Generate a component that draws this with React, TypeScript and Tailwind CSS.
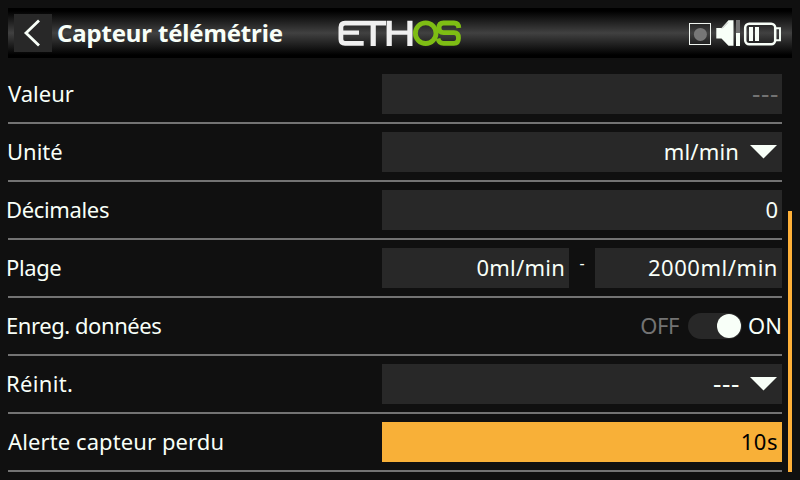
import React from "react";

function Row({ label, labelClass, children }: { label: string; labelClass: string; children: React.ReactNode }) {
  return (
    <div className="flex h-[58px] items-center justify-between border-b-2 border-[#737373]">
      <span className={`whitespace-pre pb-[2px] leading-[38px] ${labelClass}`}>{label}</span>
      {children}
    </div>
  );
}

function Field({ className, children }: { className: string; children: React.ReactNode }) {
  return <div className={`flex h-10 items-center justify-end leading-[38px] ${className}`}>{children}</div>;
}

function Value({ className, children }: { className: string; children: React.ReactNode }) {
  return <span className={`pb-[2px] ${className}`}>{children}</span>;
}

function Caret() {
  return (
    <svg className="mr-[5px] ml-[11px] h-[14px] w-[27px]" viewBox="0 0 27 14">
      <path d="M0 0H27L13.5 13.5Z" fill="#f8fff8" />
    </svg>
  );
}

function Logo() {
  return (
    <svg className="h-[26px] w-[124px]" viewBox="0 0 124 26" fill="none">
      <g stroke="#f0f0f0" strokeWidth="4.8">
        <path d="M48 3.100H7Q2.9 3.100 2.9 7.200V19.200Q2.9 23.300 7 23.300H25.700" />
        <path d="M35.2 3V26M51.2 .8V26M71.900 .8V26" strokeWidth="5.200" />
        <path d="M3 12.700H21M52 12.700H72" strokeWidth="4.200" />
      </g>
      <g stroke="#7ebd14" strokeWidth="4.8">
        <ellipse cx="87.700" cy="13.200" rx="10.300" ry="10.300" />
        <path d="M120.800 8Q120.500 3 116 3H105.500Q101 3 101 7.800Q101 12.700 105.500 12.700H116Q120.500 12.700 120.500 18Q120.500 23.300 116 23.300H105.500Q101 23.300 100 18.500" />
      </g>
    </svg>
  );
}

function StatusIcons() {
  return (
    <svg className="h-[28px] w-[94px]" viewBox="0 0 94 28">
      <rect x="1.500" y="4.500" width="21" height="21" fill="none" stroke="#f0f5f0" />
      <circle cx="12.400" cy="15.400" r="6.500" fill="#777" />
      <path d="M28.300 9H33.500L40.500 1.300H45.500V26.700H40.500L33.500 19.500H28.300Z" fill="#f8fff8" />
      <path d="M34 9.500L40 3.500" stroke="#999" strokeWidth=".7" />
      <path d="M48 1H52V14H48Z" fill="#737373" />
      <path d="M48 14H52V27H48Z" fill="#f8fff8" />
      <rect x="57.200" y="4.700" width="30" height="20.600" rx="4" fill="none" stroke="#f8fff8" strokeWidth="2.500" />
      <path d="M88 9.200H92V21.300H88" fill="none" stroke="#f8fff8" strokeWidth="1.900" />
      <path d="M61 8H65V22H61ZM67 8H71V22H67Z" fill="#f8fff8" />
    </svg>
  );
}

export default function App() {
  return (
    <main className="h-[480px] w-[800px] overflow-hidden bg-[#101010] pt-2 pl-2 font-['Noto_Sans',sans-serif] text-[22px] text-[#f8fff8]">
      <header className="flex h-[50px] w-[784px] items-center bg-[linear-gradient(#000_0%,#000_6%,#151515_20%,#414141_50%,#151515_80%,#000_94%,#000_100%)] pl-[6px]">
        <button className="flex size-[38px] items-center justify-center bg-[#282828]" aria-label="Retour">
          <svg className="size-[38px]" viewBox="0 0 38 38">
            <path d="M25 6.500L12 19L25 31.500" fill="none" stroke="#f8fff8" strokeWidth="2.800" />
          </svg>
        </button>
        <h1 className="ml-[5px] w-[281px] text-[24px] leading-[50px] font-bold tracking-[-0.17px]">Capteur télémétrie</h1>
        <Logo />
        <div className="ml-auto mr-[10px] flex">
          <StatusIcons />
        </div>
      </header>
      <div className="flex pt-2">
        <section className="w-[774px]">
          <Row label="Valeur" labelClass="">
            <Field className="w-[400px] bg-[#282828] pr-[3px] text-[#737373]"><Value className="text-[26px] tracking-[0.6px]">---</Value></Field>
          </Row>
          <Row label="Unité" labelClass="-ml-px">
            <Field className="w-[400px] bg-[#282828]"><Value className="tracking-[0.15px]">ml/min</Value><Caret /></Field>
          </Row>
          <Row label="Décimales" labelClass="-ml-[2px] tracking-[-0.35px]">
            <Field className="w-[400px] bg-[#282828] pr-1"><Value className="">0</Value></Field>
          </Row>
          <Row label="Plage" labelClass="-ml-[2px] tracking-[-0.4px]">
            <div className="flex w-[400px] justify-between">
              <Field className="w-[187px] bg-[#282828] pr-1"><Value className="tracking-[0.25px]">0ml/min</Value></Field>
              <span className="text-[16px] leading-[30px]">-</span>
              <Field className="w-[187px] bg-[#282828] pr-1"><Value className="tracking-[0.55px]">2000ml/min</Value></Field>
            </div>
          </Row>
          <Row label="Enreg. données" labelClass="-ml-[2px] tracking-[-0.43px]">
            <div className="flex items-center leading-[38px]">
              <Value className="tracking-[-0.4px] text-[#737373]">OFF</Value>
              <span className="mr-[6px] ml-[9px] flex h-[26px] w-[54px] items-center justify-end rounded-full bg-[#282828] pr-px">
                <span className="size-6 rounded-full bg-[#f8fff8]" />
              </span>
              <Value className="">ON</Value>
            </div>
          </Row>
          <Row label="Réinit." labelClass="-ml-[2px] tracking-[0.35px]">
            <Field className="w-[400px] bg-[#282828]"><Value className="-mr-px text-[26px] tracking-[0.6px]">---</Value><Caret /></Field>
          </Row>
          <Row label="Alerte capteur perdu" labelClass="tracking-[0.1px]">
            <Field className="w-[400px] bg-[#f8b038] pr-1 text-black"><Value className="tracking-[0.5px]">10s</Value></Field>
          </Row>
        </section>
        <div className="mt-[145px] ml-[6px] h-[261px] w-1 bg-[#ffb038]" />
      </div>
    </main>
  );
}
